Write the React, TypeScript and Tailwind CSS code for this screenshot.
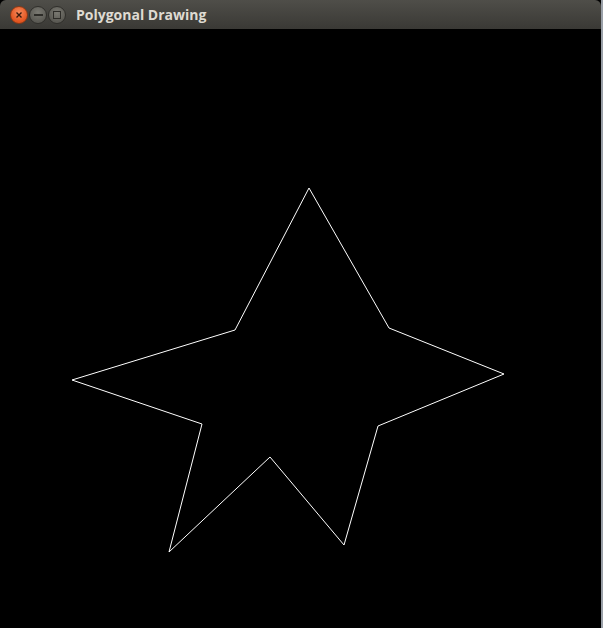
const starPoints =
  "309,188 389,328 504,374 378,426 344,545 270,457 169,552 202,424 72,380 235,330";

function TitleButton({ kind }: { kind: "close" | "min" | "max" }) {
  const base =
    kind === "close"
      ? "bg-[radial-gradient(circle_at_50%_35%,#f58a5c,#e2541f_70%)] border-[#8a3a17]"
      : "bg-[radial-gradient(circle_at_50%_35%,#7a7972,#5a5953_70%)] border-[#302f2b]";
  return (
    <div
      className={`w-[18px] h-[18px] rounded-full border flex items-center justify-center ${base}`}
    >
      {kind === "close" && (
        <svg width="8" height="8" viewBox="0 0 8 8">
          <path d="M1.5 1.5 L6.5 6.5 M6.5 1.5 L1.5 6.5" stroke="#3a1a0c" strokeWidth="1.4" />
        </svg>
      )}
      {kind === "min" && <div className="w-[9px] h-[2px] bg-[#2d2c28]" />}
      {kind === "max" && <div className="w-[8px] h-[8px] border border-[#2d2c28]" />}
    </div>
  );
}

export default function App() {
  return (
    <div className="w-[603px] h-[628px] flex bg-[#d8d8d8] overflow-hidden">
      <div className="w-[601px] h-full flex flex-col bg-black">
        <div className="h-[29px] shrink-0 flex items-center rounded-t-[6px] bg-gradient-to-b from-[#4f4e49] to-[#3a3935] pl-[10px]">
          <div className="flex gap-[1px] pt-[1px]">
            <TitleButton kind="close" />
            <TitleButton kind="min" />
            <TitleButton kind="max" />
          </div>
          <span className="ml-[10px] text-[14px] font-bold text-[#dfdbd2] font-['Open_Sans',sans-serif] leading-none">
            Polygonal Drawing
          </span>
        </div>
        <div className="relative flex-1">
          <svg className="absolute left-0 top-[-29px]" width="601" height="628">
            <polygon points={starPoints} fill="none" stroke="#ffffff" strokeWidth="1" />
          </svg>
        </div>
      </div>
      <div className="w-[2px] h-full bg-[#9aa0a8]" />
    </div>
  );
}
